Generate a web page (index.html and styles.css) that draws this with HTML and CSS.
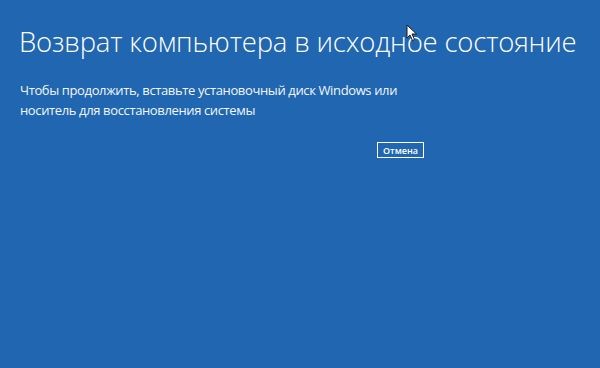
FILE: index.html
```html
<!DOCTYPE html>
<html>
<head>
    <title>Возврат компьютера в исходное состояние</title>
    <link rel="stylesheet" href="styles.css">
</head>
<body>
    <div class="screen">
        <h1 class="title">Возврат компьютера в исходное состояние</h1>
        <p class="message">Чтобы продолжить, вставьте установочный диск Windows или<br>носитель для восстановления системы</p>
        <div class="actions">
            <button class="cancel-btn">Отмена</button>
        </div>
        <!-- mouse pointer captured in the screenshot -->
        <svg class="pointer" width="12" height="18" viewBox="0 0 12 18">
            <path d="M1 1 L1 14 L4 11 L6.5 16.5 L8.5 15.5 L6 10 L10.5 10 Z" fill="#fff" stroke="#1a1a1a" stroke-width="1"/>
        </svg>
    </div>
</body>
</html>
```

FILE: styles.css
```css
:root {
    --bg-color: #2066b1;
    --text-color: #ffffff;
}

html, body {
    margin: 0;
    padding: 0;
    height: 100%;
}

body {
    background-color: var(--bg-color);
    color: var(--text-color);
    font-family: "Open Sans", "Noto Sans", sans-serif;
}

.screen {
    position: relative;
    height: 100%;
    padding: 22px 0 0 19px;
    box-sizing: border-box;
}

.title {
    font-size: 27.5px;
    font-weight: 300;
    margin: 0;
    line-height: 40px;
    letter-spacing: -0.18px;
    white-space: nowrap;
}

.message {
    font-size: 13px;
    line-height: 20px;
    margin: 18px 0 0 1px;
    letter-spacing: -0.37px;
    opacity: 0.95;
}

.actions {
    display: flex;
    padding-left: 358px;
    margin-top: 22px;
}

.cancel-btn {
    background: transparent;
    color: var(--text-color);
    border: 1px solid #fff;
    font-family: "Open Sans", sans-serif;
    font-size: 9px;
    font-weight: 600;
    padding: 0;
    height: 16px;
    width: 47px;
    line-height: 13px;
}

.pointer {
    position: absolute;
    left: 406px;
    top: 24px;
}
```
